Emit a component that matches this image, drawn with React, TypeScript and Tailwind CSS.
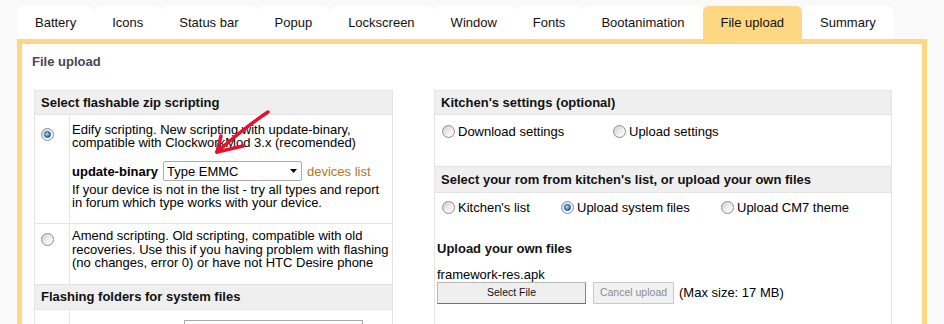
import React from "react";

const tabs = [
  "Battery",
  "Icons",
  "Status bar",
  "Popup",
  "Lockscreen",
  "Window",
  "Fonts",
  "Bootanimation",
  "File upload",
  "Summary",
];

const Radio = ({ checked = false }: { checked?: boolean }) => (
  <span className="inline-flex h-[13px] w-[13px] shrink-0 items-center justify-center rounded-full border border-[#8d8d8d] bg-linear-to-br from-[#cfcfcf] via-[#ececec] to-[#ffffff]">
    {checked && (
      <span className="h-[7px] w-[7px] rounded-full border border-[#14508f] bg-[radial-gradient(circle_at_35%_35%,#b5e3ff,#3a8fd6_55%,#0d4d8f)]" />
    )}
  </span>
);

const RadioLabel = ({
  label,
  checked,
  width,
}: {
  label: string;
  checked?: boolean;
  width: string;
}) => (
  <label className={`flex items-center gap-[3px] ${width}`}>
    <Radio checked={checked} />
    <span>{label}</span>
  </label>
);

const PanelHeader = ({ title, h }: { title: string; h: string }) => (
  <div className={`flex items-center bg-[#efefef] pl-[6px] font-bold text-[#111] ${h}`}>
    {title}
  </div>
);

export default function App() {
  return (
    <div className="relative h-[324px] w-[944px] overflow-hidden bg-[#f9f9f9] font-['Liberation_Sans',Arial,sans-serif] text-[13px] text-black">
      <div className="flex pl-[17px] pt-[6px]">
        {tabs.map((t) => (
          <div
            key={t}
            className={`flex h-[33px] items-center rounded-t-[6px] px-[18px] text-[#111] ${
              t === "File upload" ? "bg-[#fdd782]" : "bg-white"
            }`}
          >
            {t}
          </div>
        ))}
      </div>

      <div className="ml-[17px] h-[320px] w-[910px] border-[5px] border-[#fdd782] bg-white">
        <h2 className="pl-[10px] pt-[10px] text-[13px] leading-[15px] font-bold text-[#4b4456]">
          File upload
        </h2>

        <div className="mt-[21px] flex items-start pl-[12px]">
          {/* left panel */}
          <div className="w-[359px] border border-[#e4e4e4]">
            <PanelHeader title="Select flashable zip scripting" h="h-[23px]" />

            <div className="flex h-[109px] border-t border-[#e4e4e4]">
              <div className="w-[35px] shrink-0 border-r border-[#e4e4e4] pl-[6px] pt-[9px]">
                <Radio checked />
              </div>
              <div className="pl-[2px] pt-[8px] leading-[13px]">
                <p>
                  Edify scripting. New scripting with update-binary,
                  <br />
                  compatible with ClockworkMod 3.x (recomended)
                </p>
                <div className="mt-[12px] flex h-[20px] items-center">
                  <span className="font-bold">update-binary</span>
                  <div className="ml-[5px] flex h-[20px] w-[139px] items-center justify-between rounded-[2px] border border-[#ababab] bg-white pl-[3px] pr-[4px]">
                    <span>Type EMMC</span>
                    <svg width="7" height="4" viewBox="0 0 7 4">
                      <path d="M0 0h7L3.5 4z" fill="#000" />
                    </svg>
                  </div>
                  <a className="ml-[5px] text-[#b5761c]">devices list</a>
                </div>
                <p className="mt-[2px]">
                  If your device is not in the list - try all types and report
                  <br />
                  in forum which type works with your device.
                </p>
              </div>
            </div>

            <div className="flex h-[61px] border-t border-[#e4e4e4]">
              <div className="w-[35px] shrink-0 border-r border-[#e4e4e4] pl-[6px] pt-[8px]">
                <Radio />
              </div>
              <div className="pl-[2px] pt-[5px] leading-[13.5px]">
                Amend scripting. Old scripting, compatible with old
                <br />
                recoveries. Use this if you having problem with flashing
                <br />
                (no changes, error 0) or have not HTC Desire phone
              </div>
            </div>

            <div className="border-t border-[#e4e4e4]">
              <PanelHeader title="Flashing folders for system files" h="h-[24px]" />
            </div>

            <div className="flex h-[40px] border-t border-[#e4e4e4]">
              <div className="w-[35px] shrink-0 border-r border-[#e4e4e4]" />
              <div className="flex items-start pl-[3px] pt-[9px]">
                <span className="w-[111px]">framework-res.apk</span>
                <div className="mt-[1px] h-[20px] w-[179px] border border-[#a9a9a9] bg-white" />
              </div>
            </div>
          </div>

          {/* right panel */}
          <div className="ml-[41px] h-[260px] w-[458px] border border-[#e4e4e4]">
            <PanelHeader title="Kitchen's settings (optional)" h="h-[23px]" />
            <div className="h-[52px] border-t border-[#e4e4e4] pl-[7px] pt-[7px]">
              <div className="flex">
                <RadioLabel label="Download settings" width="w-[171px]" />
                <RadioLabel label="Upload settings" width="w-[150px]" />
              </div>
            </div>
            <div className="border-t border-[#e4e4e4]">
              <PanelHeader
                title="Select your rom from kitchen's list, or upload your own files"
                h="h-[25px]"
              />
            </div>
            <div className="border-t border-[#e4e4e4] pl-[2px] pt-[5px]">
              <div className="flex pl-[5px]">
                <RadioLabel label="Kitchen's list" width="w-[119px]" />
                <RadioLabel label="Upload system files" checked width="w-[160px]" />
                <RadioLabel label="Upload CM7 theme" width="w-[150px]" />
              </div>
              <h3 className="mt-[23px] leading-[15px] font-bold text-[#111]">
                Upload your own files
              </h3>
              <div className="mt-[12px] leading-[14px]">framework-res.apk</div>
              <div className="flex items-center">
                <button className="h-[22px] w-[149px] border border-[#b9b9b9] border-b-[#6f6f6f] border-r-[#8a8a8a] bg-[#efefef] text-[10.5px] text-[#111]">
                  Select File
                </button>
                <button
                  disabled
                  className="ml-[7px] h-[22px] w-[81px] border border-[#c9c9c9] bg-[#f1f1f1] text-[10.5px] text-[#8c8c8c]"
                >
                  Cancel upload
                </button>
                <span className="ml-[5px]">(Max size: 17 MB)</span>
              </div>
            </div>
          </div>
        </div>
      </div>

      <svg
        className="pointer-events-none absolute left-0 top-0"
        width="944"
        height="324"
        viewBox="0 0 944 324"
      >
        <g fill="none" stroke="#e8102b" strokeWidth="3.5" strokeLinecap="round" strokeLinejoin="round">
          <path d="M268 112 Q244 128 217 152" />
          <path d="M217 152 L221 136" />
          <path d="M217 152 L243 146" />
        </g>
      </svg>
    </div>
  );
}
